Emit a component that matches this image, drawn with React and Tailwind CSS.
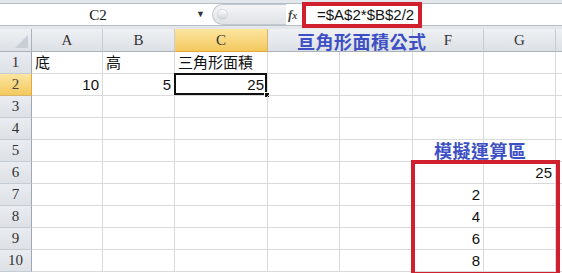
import React from 'react';

const cols = [
  { k: 'A', w: 'w-[71px]' },
  { k: 'B', w: 'w-[72px]' },
  { k: 'C', w: 'w-[93px]' },
  { k: 'D', w: 'w-[72px]' },
  { k: 'E', w: 'w-[73px]' },
  { k: 'F', w: 'w-[71px]' },
  { k: 'G', w: 'w-[72px]' },
];

// cell contents: row -> col -> [text, align]
const cells = {
  1: { A: ['底', 'l'], B: ['高', 'l'], C: ['三角形面積', 'l'] },
  2: { A: ['10', 'r'], B: ['5', 'r'], C: ['25', 'r'] },
  6: { G: ['25', 'r'] },
  7: { F: ['2', 'r'] },
  8: { F: ['4', 'r'] },
  9: { F: ['6', 'r'] },
  10: { F: ['8', 'r'] },
};

const rows = [1, 2, 3, 4, 5, 6, 7, 8, 9, 10];

// D and E headers sit under the blue label in the screenshot
const hiddenHead = ['D', 'E'];

const App = () => {
  return (
    <div className="relative w-[562px] h-[273px] overflow-hidden bg-white font-['Liberation_Sans','Noto_Sans_CJK_TC',sans-serif] text-[#111]">
      {/* Formula bar */}
      <div className="h-[29px] bg-[#e3e6ea] pt-[3px] pb-[3px]">
        <div className="h-[23px] bg-white border-y border-[#b7bec7] flex items-center">
          <div className="w-[196px] text-center text-[15px] font-['Liberation_Serif',serif] leading-none pt-[1px]">C2</div>
          <div className="w-[16px] text-[9px] text-[#333] leading-none">▼</div>
          <div className="w-[74px] h-[21px] rounded-l-full border border-[#c3c8ce] border-r-0 bg-gradient-to-b from-[#f4f5f7] to-[#dfe2e6] flex items-center pl-[4px]">
            <div className="w-[11px] h-[11px] rounded-full bg-gradient-to-b from-[#ffffff] to-[#cfd3d8] border border-[#d4d8dc]" />
          </div>
          <div className="w-[16px] pl-[2px] text-[13px] italic font-bold font-['Liberation_Serif',serif] text-[#444] leading-none">
            f<span className="text-[10px]">x</span>
          </div>
          <div className="flex-1 h-full border-l border-[#d0d4d9] pl-[14px] text-[15px] leading-[21px]">=$A$2*$B$2/2</div>
        </div>
      </div>

      {/* Column header */}
      <div className="flex h-[23px] font-['Liberation_Serif',serif] text-[15px] text-[#333]">
        <div className="w-[32px] h-full bg-gradient-to-b from-[#eef1f4] to-[#dde1e6] border-r border-b border-[#a9b1bb] relative">
          <div className="absolute right-[3px] bottom-[3px] w-0 h-0 border-l-[13px] border-l-transparent border-b-[13px] border-b-[#c9ced4]" />
        </div>
        {cols.map(c => (
          <div
            key={c.k}
            className={`${c.w} h-full flex items-center justify-center border-b ${
              c.k === 'D' ? 'border-r-0' : 'border-r'
            } ${
              c.k === 'C'
                ? 'bg-gradient-to-b from-[#fbe5a0] to-[#f4c95c] border-[#e2a83d] border-r-[#d8b36a]'
                : 'bg-gradient-to-b from-[#eef1f4] to-[#dde1e6] border-[#a9b1bb] border-r-[#c6ccd3]'
            }`}
          >
            {hiddenHead.includes(c.k) ? null : c.k}
          </div>
        ))}
        <div className="flex-1 h-full bg-gradient-to-b from-[#eef1f4] to-[#dde1e6] border-b border-[#a9b1bb]" />
      </div>

      {/* Rows */}
      {rows.map(r => (
        <div key={r} className="flex h-[22px]">
          <div
            className={`w-[32px] h-full flex items-center justify-center text-[15px] font-['Liberation_Serif',serif] border-r border-b ${
              r === 2
                ? 'bg-gradient-to-b from-[#fbe5a0] to-[#f4c95c] border-[#d8b36a] border-r-[#e2a83d] text-[#444]'
                : 'bg-gradient-to-b from-[#e9ecf0] to-[#dde1e6] border-[#c6ccd3] border-r-[#9ea7b2] text-[#333]'
            }`}
          >
            {r}
          </div>
          {cols.map(c => {
            const v = cells[r] && cells[r][c.k];
            const sel = r === 2 && c.k === 'C';
            return (
              <div
                key={c.k}
                className={`${c.w} h-full relative border-r border-b border-[#d9dadc] flex items-end pb-[1px] px-[3px] text-[15px] leading-[19px] ${
                  v && v[1] === 'r' ? 'justify-end' : 'justify-start'
                }`}
              >
                {v ? v[0] : null}
                {sel && (
                  <>
                    <div className="absolute -left-[1px] -top-[1px] right-0 bottom-0 border-2 border-[#111]" />
                    <div className="absolute -right-[3px] -bottom-[3px] w-[6px] h-[6px] bg-[#111] border border-white" />
                  </>
                )}
              </div>
            );
          })}
          <div className="flex-1 h-full border-b border-[#d9dadc]" />
        </div>
      ))}

      {/* Annotations */}
      <div className="absolute left-[302px] top-[2px] w-[120px] h-[26px] border-4 border-[#d0202e]" />
      <div className="absolute left-[297px] top-[32px] text-[18px] font-bold leading-[22px] text-[#3d4fc4] tracking-[0.5px]">
        亘角形面積公式
      </div>
      <div className="absolute left-[434px] top-[141px] text-[18px] font-bold leading-[22px] text-[#3d4fc4] tracking-[0.5px]">
        模擬運算區
      </div>
      <div className="absolute left-[411px] top-[160px] w-[149px] h-[116px] border-4 border-[#d0202e]" />
    </div>
  );
};

export default App;
